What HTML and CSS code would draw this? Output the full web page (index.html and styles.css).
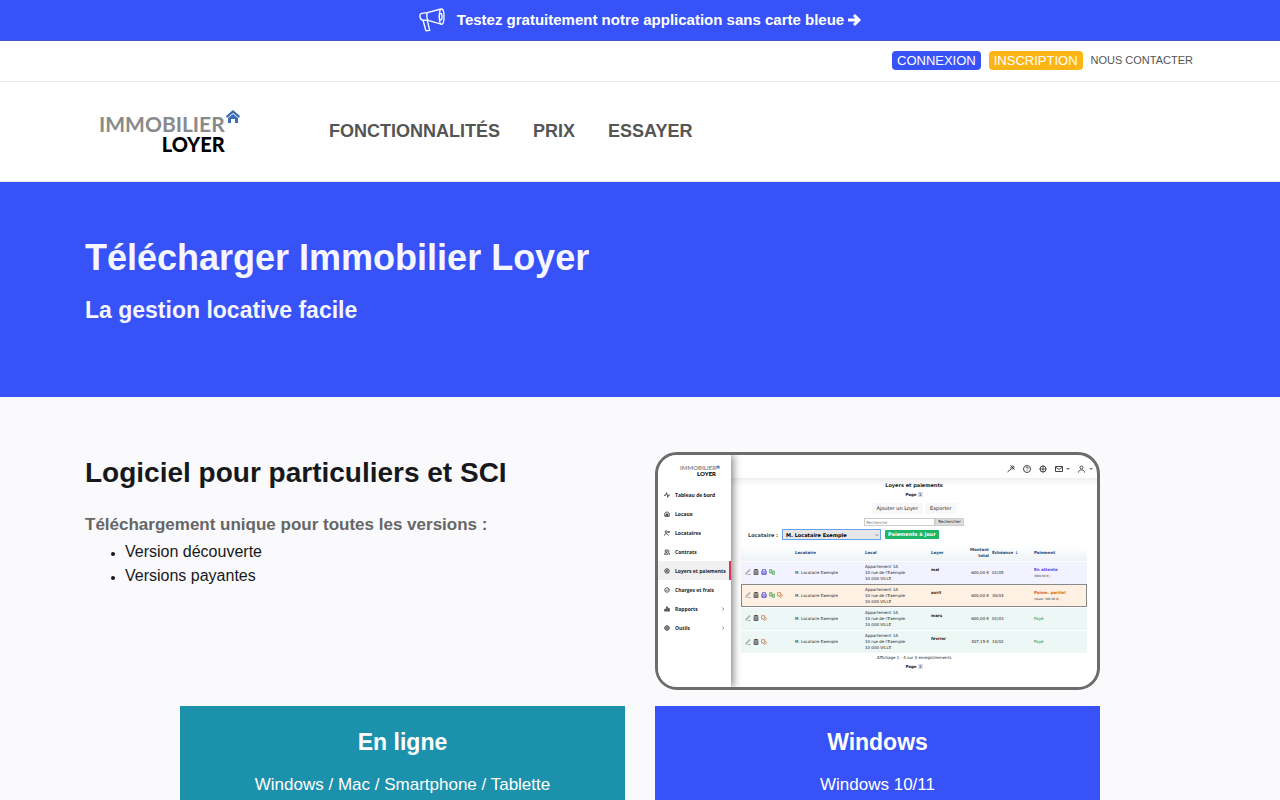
FILE: index.html
```html
<!DOCTYPE html>
<html lang="fr">
<head>
    <meta charset="UTF-8">
    <meta name="viewport" content="width=device-width, initial-scale=1.0">
    <title>Télécharger Immobilier Loyer</title>
    <link rel="stylesheet" href="styles.css">
</head>
<body>
    <!-- Icons shared by the application preview -->
    <svg class="sprite" aria-hidden="true">
        <symbol id="i-edit" viewBox="0 0 16 16"><path d="M2 14l2-5 8-8 2 2-8 8-4 3M7 15h8"/></symbol>
        <symbol id="i-trash" viewBox="0 0 16 16"><path d="M2 3h12M5 3V1h6v2M3 5v10h10V5M6 6v7M10 6v7"/></symbol>
        <symbol id="i-print" viewBox="0 0 16 16"><path d="M4 6V1h8v5M1 6h14v7H1zM4 10h8v5H4z"/></symbol>
        <symbol id="i-pay" viewBox="0 0 16 16"><path d="M1 2h7v12M1 2v8h7M10 6h5v8h-5zM3 5h3"/></symbol>
        <symbol id="i-copy" viewBox="0 0 16 16"><path d="M1 2h9v8H1zM6 12l4 3 5-5-3-4"/></symbol>
        <symbol id="i-pulse" viewBox="0 0 16 16"><path d="M0 9h4l3-7 3 12 2-6h4"/></symbol>
        <symbol id="i-home" viewBox="0 0 16 16"><path d="M2 6l6-4 6 4v8H2zM6 14V8h4v6M8 8v6"/></symbol>
        <symbol id="i-user" viewBox="0 0 16 16"><circle cx="7" cy="5" r="3"/><path d="M1 15c0-7 12-7 12 0"/></symbol>
        <symbol id="i-user-add" viewBox="0 0 16 16"><circle cx="6" cy="5" r="3"/><path d="M1 15c0-7 10-7 10 0M11 5h5M13 3v5"/></symbol>
        <symbol id="i-users" viewBox="0 0 16 16"><circle cx="6" cy="5" r="3"/><path d="M1 14c0-6 10-6 10 0zM10 2c4 0 4 6 1 6M13 14h2c0-3-1-4-3-5"/></symbol>
        <symbol id="i-euro" viewBox="0 0 16 16"><circle cx="8" cy="8" r="6"/><path d="M11 5c-5-2-5 8 0 6M4 8h6"/></symbol>
        <symbol id="i-check" viewBox="0 0 16 16"><circle cx="8" cy="8" r="6"/><path d="M5 8l2 2 4-4"/></symbol>
        <symbol id="i-bars" viewBox="0 0 16 16"><path d="M2 8h2v6H2zM7 2h2v12H7zM12 6h2v8h-2z"/></symbol>
        <symbol id="i-gear" viewBox="0 0 16 16"><circle cx="8" cy="8" r="6"/><circle cx="8" cy="8" r="2"/><path d="M8 1v4M8 11v4M1 8h4M11 8h4"/></symbol>
        <symbol id="i-key" viewBox="0 0 16 16"><circle cx="11" cy="5" r="3"/><path d="M9 7l-8 7M7 1l8 8"/></symbol>
        <symbol id="i-help" viewBox="0 0 16 16"><circle cx="8" cy="8" r="7"/><path d="M6 6c0-3 5-2 4 1L8 9M8 11v1"/></symbol>
        <symbol id="i-mail" viewBox="0 0 16 16"><path d="M1 3h14v10H1zM1 4l7 5 7-5"/></symbol>
        <symbol id="i-arrow" viewBox="0 0 16 16"><path d="M5 2l6 6-6 6"/></symbol>
        <symbol id="i-house" viewBox="0 0 14 13"><path class="solid" d="M0 6l7-6 7 6-1 2-6-5-6 5zM2 8l5-4 5 4v5H9V9H5v4H2z"/></symbol>
    </svg>

    <a class="promo" href="#essayer">
        <svg class="megaphone" viewBox="0 0 78 70" aria-hidden="true">
            <path d="M25 13L8 15Q2 16 3 24Q4 34 10 35L27 36M25 13Q21 24 27 36M25 13L66 2M27 36L69 48"/>
            <ellipse cx="68" cy="25" rx="7" ry="23"/>
            <ellipse cx="65" cy="25" rx="4" ry="10"/>
            <path d="M12 35L20 65Q21 68 25 67L32 66L25 37"/>
        </svg>
        <span>Testez gratuitement notre application sans carte bleue</span>
        <svg class="promo-arrow" viewBox="0 0 14 14" aria-hidden="true"><path d="M1 7h11M7 2l5 5-5 5"/></svg>
    </a>

    <div class="account-bar">
        <div class="container account-links">
            <a class="pill pill-blue" href="#connexion">CONNEXION</a>
            <a class="pill pill-yellow" href="#inscription">INSCRIPTION</a>
            <a class="contact" href="#contact">NOUS CONTACTER</a>
        </div>
    </div>

    <header class="header">
        <div class="container header-inner">
            <a class="logo" href="#">
                <span class="logo-text">IMMOBILIER<strong>LOYER</strong></span>
                <svg class="logo-house" aria-hidden="true"><use href="#i-house"/></svg>
            </a>
            <nav class="nav">
                <a href="#fonctionnalites">FONCTIONNALITÉS</a>
                <a href="#prix">PRIX</a>
                <a href="#essayer">ESSAYER</a>
            </nav>
        </div>
    </header>

    <section class="hero">
        <div class="container">
            <h1>Télécharger Immobilier Loyer</h1>
            <h2>La gestion locative facile</h2>
        </div>
    </section>

    <main class="container">
        <div class="intro">
            <div class="intro-text">
                <h2>Logiciel pour particuliers et SCI</h2>
                <h3>Téléchargement unique pour toutes les versions :</h3>
                <ul>
                    <li>Version découverte</li>
                    <li>Versions payantes</li>
                </ul>
            </div>

            <div class="preview">
                <div class="side">
                    <div class="side-logo">
                        <span>IMMOBILIER<strong>LOYER</strong></span>
                        <svg aria-hidden="true"><use href="#i-house"/></svg>
                    </div>
                    <a href="#"><svg><use href="#i-pulse"/></svg>Tableau de bord</a>
                    <a href="#"><svg><use href="#i-home"/></svg>Locaux</a>
                    <a href="#"><svg><use href="#i-user-add"/></svg>Locataires</a>
                    <a href="#"><svg><use href="#i-users"/></svg>Contrats</a>
                    <a class="active" href="#"><svg><use href="#i-euro"/></svg>Loyers et paiements</a>
                    <a href="#"><svg><use href="#i-check"/></svg>Charges et frais</a>
                    <a href="#"><svg><use href="#i-bars"/></svg>Rapports<svg class="more"><use href="#i-arrow"/></svg></a>
                    <a href="#"><svg><use href="#i-gear"/></svg>Outils<svg class="more"><use href="#i-arrow"/></svg></a>
                </div>
                <div class="app">
                    <div class="app-bar">
                        <svg><use href="#i-key"/></svg>
                        <svg><use href="#i-help"/></svg>
                        <svg><use href="#i-gear"/></svg>
                        <span class="drop"><svg><use href="#i-mail"/></svg></span>
                        <span class="drop"><svg><use href="#i-user"/></svg></span>
                    </div>
                    <div class="app-body">
                        <p class="app-title">Loyers et paiements</p>
                        <p class="page">Page <span>1</span></p>
                        <div class="app-buttons">
                            <button type="button">Ajouter un Loyer</button>
                            <button type="button">Exporter</button>
                        </div>
                        <div class="search">
                            <input type="text" placeholder="Recherche" aria-label="Recherche">
                            <button type="button">Rechercher</button>
                        </div>
                        <div class="filter">
                            <label for="locataire">Locataire :</label>
                            <span class="select-box">
                                <select id="locataire"><option>M. Locataire Exemple</option></select>
                                <svg aria-hidden="true"><use href="#i-arrow"/></svg>
                            </span>
                            <span class="badge">Paiements à jour</span>
                        </div>
                        <table>
                            <colgroup>
                                <col class="c-actions"><col class="c-tenant"><col class="c-place"><col class="c-rent"><col class="c-total"><col class="c-due"><col class="c-pay">
                            </colgroup>
                            <thead>
                                <tr><th></th><th>Locataire</th><th>Local</th><th>Loyer</th><th class="amount">Montant total</th><th>Échéance ↓</th><th>Paiement</th></tr>
                            </thead>
                            <tbody>
                                <tr class="waiting">
                                    <td><svg class="grey"><use href="#i-edit"/></svg><svg><use href="#i-trash"/></svg><svg class="violet"><use href="#i-print"/></svg><svg class="green"><use href="#i-pay"/></svg></td>
                                    <td>M. Locataire Exemple</td>
                                    <td>Appartement 1A<br>10 rue de l'Exemple<br>10 000 VILLE</td>
                                    <td class="month">mai</td>
                                    <td class="amount">600,00 €</td>
                                    <td>01/05</td>
                                    <td class="status"><b>En attente</b><small>(600,00 €)</small></td>
                                </tr>
                                <tr class="partial">
                                    <td><svg class="grey"><use href="#i-edit"/></svg><svg><use href="#i-trash"/></svg><svg class="violet"><use href="#i-print"/></svg><svg class="green"><use href="#i-pay"/></svg><svg class="orange"><use href="#i-copy"/></svg></td>
                                    <td>M. Locataire Exemple</td>
                                    <td>Appartement 1A<br>10 rue de l'Exemple<br>10 000 VILLE</td>
                                    <td class="month">avril</td>
                                    <td class="amount">600,00 €</td>
                                    <td>30/04</td>
                                    <td class="status"><b>Paiem. partiel</b><small>(reste: 300,00 €)</small></td>
                                </tr>
                                <tr class="paid">
                                    <td><svg class="grey"><use href="#i-edit"/></svg><svg><use href="#i-trash"/></svg><svg class="orange"><use href="#i-copy"/></svg></td>
                                    <td>M. Locataire Exemple</td>
                                    <td>Appartement 1A<br>10 rue de l'Exemple<br>10 000 VILLE</td>
                                    <td class="month">mars</td>
                                    <td class="amount">600,00 €</td>
                                    <td>01/03</td>
                                    <td class="status">Payé</td>
                                </tr>
                                <tr class="paid">
                                    <td><svg class="grey"><use href="#i-edit"/></svg><svg><use href="#i-trash"/></svg><svg class="orange"><use href="#i-copy"/></svg></td>
                                    <td>M. Locataire Exemple</td>
                                    <td>Appartement 1A<br>10 rue de l'Exemple<br>10 000 VILLE</td>
                                    <td class="month">février</td>
                                    <td class="amount">407,15 €</td>
                                    <td>10/02</td>
                                    <td class="status">Payé</td>
                                </tr>
                            </tbody>
                        </table>
                        <p class="count">Affichage 1 - 4 sur 4 enregistrements</p>
                        <p class="page">Page <span>1</span></p>
                    </div>
                </div>
            </div>
        </div>

        <div class="cards">
            <section class="card card-teal">
                <h2>En ligne</h2>
                <p>Windows / Mac / Smartphone / Tablette</p>
            </section>
            <section class="card card-blue">
                <h2>Windows</h2>
                <p>Windows 10/11</p>
            </section>
        </div>
    </main>
</body>
</html>
```
FILE: styles.css
```css
* {
    box-sizing: border-box;
}
body {
    margin: 0;
    font-family: "Liberation Sans", Arial, sans-serif;
    font-size: 16px;
    line-height: 24px;
    color: #16181b;
    background: #fafafd;
}
h1, h2, h3, p, ul {
    margin: 0;
}
a {
    color: inherit;
    text-decoration: none;
}
svg {
    fill: none;
    stroke: currentColor;
}
.solid {
    fill: currentColor;
    stroke: none;
}
.sprite {
    display: none;
}
.container {
    width: 100%;
    max-width: 1140px;
    margin: 0 auto;
    padding: 0 15px;
}

/* top bars */
.promo {
    display: flex;
    align-items: center;
    justify-content: center;
    height: 41px;
    background: #3753f8;
    border-bottom: 1px solid #4453c4;
    color: #fff;
    font-size: 15px;
    font-weight: bold;
}
.megaphone {
    width: 26px;
    height: 24px;
    margin-right: 12px;
    stroke-width: 4;
}
.promo-arrow {
    width: 14px;
    height: 14px;
    margin-left: 3px;
    stroke-width: 3;
}
.account-bar {
    background: #fff;
    border-bottom: 1px solid #e6e6e6;
}
.account-links {
    display: flex;
    align-items: center;
    justify-content: flex-end;
    gap: 8px;
    height: 40px;
    padding-right: 17px;
    padding-bottom: 2px;
}
.pill {
    padding: 0 5px;
    border-radius: 4px;
    font-size: 13px;
    line-height: 19px;
    color: #fff;
}
.pill-blue {
    background: #3753f8;
}
.pill-yellow {
    background: #fdb515;
}
.contact {
    font-size: 11px;
    color: #555;
}

/* header */
.header {
    background: #fff;
    border-bottom: 1px solid #e6e6e6;
}
.header-inner {
    display: flex;
    align-items: center;
    height: 99px;
    padding-bottom: 2px;
}
.logo {
    display: flex;
    width: 142px;
    margin: 6px 88px 0 14px;
    font-family: Lato, sans-serif;
    font-weight: bold;
    font-size: 21px;
    line-height: 20px;
    color: #8a8a8a;
}
.logo-text strong {
    display: block;
    text-align: right;
    font-size: 20px;
    color: #000;
}
.logo-house {
    width: 14px;
    height: 13px;
    margin-left: 1px;
    margin-top: -4px;
    color: #3f6db5;
}
.nav {
    display: flex;
    gap: 33px;
    font-size: 18px;
    font-weight: bold;
    color: #555;
}

/* hero */
.hero {
    min-height: 215px;
    padding: 52px 0;
    background: #3753f8;
    color: #f5f6ff;
}
.hero h1 {
    font-size: 36px;
    line-height: 48px;
}
.hero h2 {
    margin-top: 12px;
    font-size: 23px;
    line-height: 32px;
}

/* intro */
.intro {
    display: grid;
    grid-template-columns: 540px 445px;
    gap: 30px;
    padding-top: 55px;
}
.intro-text h2 {
    font-size: 28px;
    line-height: 42px;
}
.intro-text h3 {
    margin-top: 18px;
    font-size: 17px;
    line-height: 26px;
    color: #666;
}
.intro-text ul {
    margin-top: 2px;
    padding-left: 40px;
}
.intro-text li::marker {
    font-size: 12px;
}

/* application preview */
.preview {
    display: flex;
    min-height: 238px;
    border: 3px solid #6c6c6c;
    border-radius: 22px;
    overflow: hidden;
    background: #fff;
    color: #222;
    font-family: "DejaVu Sans", Verdana, sans-serif;
    font-size: 4px;
    line-height: 6px;
}
.preview svg {
    width: 6px;
    height: 6px;
    stroke-width: 2;
}
.side {
    width: 73px;
    flex: none;
    z-index: 1;
    background: #fff;
    box-shadow: 2px 0 8px rgba(0, 0, 0, 0.5);
    font-family: "Open Sans", "Noto Sans", sans-serif;
    font-size: 5px;
    font-weight: 700;
}
.side-logo {
    display: flex;
    justify-content: flex-end;
    height: 30px;
    padding: 10px 11px 0 0;
    font-family: Lato, sans-serif;
    font-size: 6px;
    line-height: 6px;
    color: #8a8a8a;
}
.side-logo strong {
    display: block;
    text-align: right;
    color: #000;
}
.side-logo svg {
    width: 4px;
    height: 4px;
    color: #3f6db5;
}
.side a {
    display: flex;
    align-items: center;
    gap: 5px;
    height: 19px;
    padding-left: 6px;
    white-space: nowrap;
}
.side a.active {
    background: #f0f0f0;
    border-right: 2px solid #dc3558;
}
.side .more {
    width: 4px;
    height: 4px;
    margin-left: auto;
    margin-right: 6px;
}
.app {
    flex: 1;
}
.app-bar {
    display: flex;
    align-items: center;
    justify-content: flex-end;
    gap: 8px;
    height: 23px;
    padding: 4px 4px 0 0;
    color: #444;
}
.app-bar svg {
    width: 8px;
    height: 8px;
}
.drop {
    display: flex;
    align-items: center;
    gap: 3px;
}
.drop::after {
    content: "";
    border: 2px solid transparent;
    border-top-color: #777;
    border-bottom: 0;
}
.app-body {
    padding: 4px 10px 0 10px;
    background: linear-gradient(#efefef, #fff 8px);
    text-align: center;
}
.app-title {
    font-size: 5px;
    font-weight: bold;
    line-height: 7px;
}
.page {
    margin-top: 3px;
    line-height: 6px;
    font-weight: bold;
}
.page span {
    padding: 0 1px;
    background: #ddd;
    font-weight: normal;
}
.app-buttons {
    display: flex;
    justify-content: center;
    gap: 2px;
    margin-top: 5px;
}
.preview button {
    padding: 0 5px;
    border: 0;
    background: #f8f8fa;
    color: #222;
    font-family: inherit;
    font-size: 5px;
    line-height: 11px;
}
.search {
    display: flex;
    justify-content: center;
    margin-top: 4px;
}
.search input {
    width: 71px;
    height: 8px;
    padding: 0 1px;
    border: 1px solid #ccc;
    font-family: inherit;
    font-size: 4px;
}
.preview .search button {
    height: 8px;
    padding: 0 2px;
    background: #ddd;
    border: 1px solid #ccc;
    font-size: 4px;
    line-height: 6px;
}
.filter {
    display: flex;
    align-items: center;
    gap: 4px;
    margin-top: 3px;
    padding-left: 7px;
    font-size: 5px;
    font-weight: bold;
    color: #444;
}
.select-box {
    display: grid;
    align-items: center;
}
.select-box select {
    grid-area: 1 / 1;
    appearance: none;
    width: 99px;
    height: 11px;
    padding: 0 3px;
    border: 1px solid #65a2e8;
    border-radius: 0;
    background: #e6e6e8;
    font-family: inherit;
    font-size: 5px;
    font-weight: bold;
}
.preview .select-box svg {
    grid-area: 1 / 1;
    justify-self: end;
    width: 4px;
    height: 4px;
    margin-right: 2px;
    transform: rotate(90deg);
}
.badge {
    padding: 0 3px;
    border-radius: 1px;
    background: #1eb567;
    color: #fff;
    line-height: 9px;
}
table {
    width: 100%;
    margin-top: 6px;
    table-layout: fixed;
    border-collapse: collapse;
    text-align: left;
    line-height: 6px;
}
.c-actions { width: 54px; }
.c-tenant { width: 70px; }
.c-place { width: 66px; }
.c-rent { width: 34px; }
.c-total { width: 27px; }
.c-due { width: 42px; }
th, td {
    padding: 0;
    white-space: nowrap;
}
th {
    height: 15px;
    background: linear-gradient(#fff, #eef3f6);
    color: #1c4576;
}
th.amount {
    white-space: normal;
}
td {
    height: 23px;
    border-top: 1px solid #fff;
}
td:first-child {
    padding-left: 4px;
}
.amount {
    padding-right: 3px;
    text-align: right;
}
td.month {
    padding-top: 5px;
    vertical-align: top;
    font-weight: bold;
}
td svg {
    margin-right: 2px;
    vertical-align: middle;
}
.status small {
    display: block;
    color: #333;
    font-size: 3px;
}
.waiting {
    background: #f3f3ff;
}
.waiting .status {
    color: #4a3df0;
}
.partial {
    background: #fff0e4;
    outline: 1px solid #888;
    outline-offset: -1px;
}
.partial .status {
    color: #d2691e;
}
.paid {
    background: #ecf7f6;
}
.paid .status {
    color: #278a27;
}
.grey { color: #888; }
.violet { color: #5a4fd0; }
.green { color: #3ca03c; }
.orange { color: #c5713c; }
.count {
    margin-top: 2px;
}

/* cards */
.cards {
    display: grid;
    grid-template-columns: 445px 445px;
    justify-content: center;
    gap: 30px;
    padding-top: 16px;
}
.card {
    min-height: 240px;
    padding: 20px;
    color: #fff;
    text-align: center;
}
.card h2 {
    font-size: 23px;
    line-height: 32px;
}
.card p {
    margin-top: 14px;
    font-size: 17px;
    line-height: 26px;
}
.card-teal {
    background: #1c91ab;
}
.card-blue {
    background: #3753f8;
}
```
